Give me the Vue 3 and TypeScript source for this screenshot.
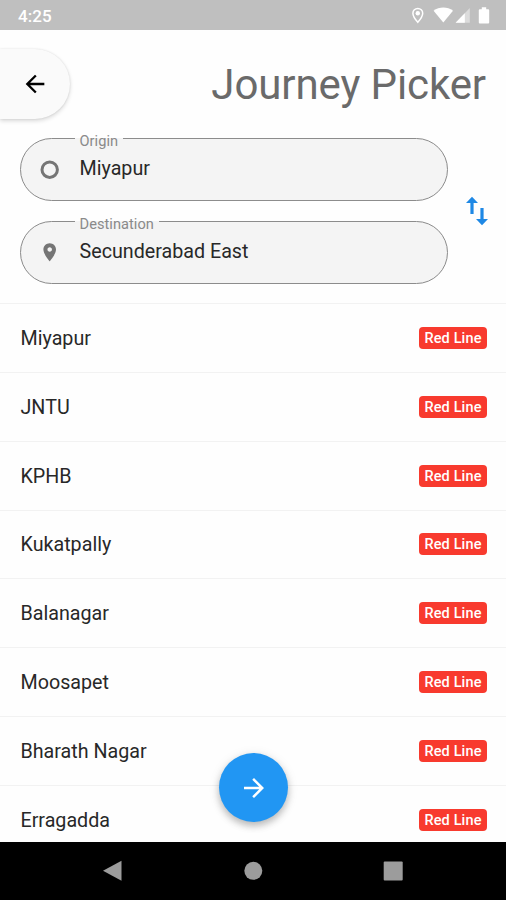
<script setup lang="ts">
interface Station {
  name: string
  line: string
}

interface JourneyField {
  label: string
  value: string
  icon: 'circle' | 'pin'
}

const fields: JourneyField[] = [
  { label: 'Origin', value: 'Miyapur', icon: 'circle' },
  { label: 'Destination', value: 'Secunderabad East', icon: 'pin' },
]

const stations: Station[] = [
  'Miyapur',
  'JNTU',
  'KPHB',
  'Kukatpally',
  'Balanagar',
  'Moosapet',
  'Bharath Nagar',
  'Erragadda',
].map((name) => ({ name, line: 'Red Line' }))
</script>

<template>
  <div class="screen">
    <header class="status">
      <span class="clock">4:25</span>
      <svg class="status-icons" width="80" height="20" viewBox="0 0 80 20" fill="#fff">
        <path d="M7.8 3.4a4.9 4.9 0 0 0-4.9 4.9c0 3.600 4.900 9 4.900 9s4.900-5.400 4.900-9a4.900 4.900 0 0 0-4.900-4.900z" fill="none" stroke="#fff" stroke-width="1.500" />
        <circle cx="7.800" cy="8.200" r="2.200" />
        <path d="M23.600 5.800c5.600-4.400 13.800-4.400 19.400 0L33.300 17.600z" />
        <path d="M59.800 3v14.800H45.600z" opacity=".45" />
        <path d="M54.800 8.200v9.600h-9.200z" />
        <path d="M71.800 2.300h4.400v1.900h2q1 0 1 1v12.400q0 1-1 1h-8.400q-1 0-1-1V5.200q0-1 1-1h2z" />
      </svg>
    </header>

    <main class="content">
      <div class="top">
        <button class="back" aria-label="Back">
          <svg width="28" height="28" viewBox="0 0 24 24">
            <path d="M20 11H7.830l5.590-5.590L12 4l-8 8 8 8 1.410-1.410L7.830 13H20v-2z" />
          </svg>
        </button>
        <h1>Journey Picker</h1>
      </div>

      <section class="journey">
        <div class="fields">
          <fieldset v-for="field in fields" :key="field.label" class="field">
            <legend><span>{{ field.label }}</span></legend>
            <div class="field-row">
              <svg v-if="field.icon === 'circle'" class="field-icon" width="24" height="24" viewBox="0 0 24 24">
                <circle cx="11.700" cy="11.700" r="7.700" fill="none" stroke="#757575" stroke-width="3" />
              </svg>
              <svg v-else class="field-icon" width="24" height="24" viewBox="0 0 24 24">
                <path transform="translate(.9 .5) scale(.9)" fill="#757575" d="M12 2C8.130 2 5 5.130 5 9c0 5.250 7 13 7 13s7-7.750 7-13c0-3.870-3.130-7-7-7zm0 9.500c-1.380 0-2.500-1.120-2.500-2.500s1.120-2.500 2.500-2.500 2.500 1.120 2.500 2.500-1.120 2.500-2.500 2.500z" />
              </svg>
              <span class="value">{{ field.value }}</span>
            </div>
          </fieldset>
        </div>
        <button class="swap" aria-label="Swap">
          <svg width="24" height="30" viewBox="0 0 24 30" fill="#1e88e5">
            <path d="M7 .8 13 7H8.600v11H5.400V7H1z" />
            <path d="M17 29.200 11 23h4.400V12h3.200v11H23z" />
          </svg>
        </button>
      </section>

      <ul class="stations">
        <li v-for="station in stations" :key="station.name">
          <span class="name">{{ station.name }}</span>
          <span class="badge">{{ station.line }}</span>
        </li>
      </ul>

      <button class="fab" aria-label="Continue">
        <svg width="30" height="30" viewBox="0 0 24 24" fill="#fff">
          <path d="m12 4-1.410 1.410L16.170 11H4v2h12.170l-5.580 5.590L12 20l8-8z" />
        </svg>
      </button>
    </main>

    <nav class="navbar">
      <svg width="20" height="22" viewBox="0 0 20 22"><path d="M18.500 .8v20L0 10.800z" /></svg>
      <svg width="20" height="22" viewBox="0 0 20 22"><circle cx="10.300" cy="10.800" r="9" /></svg>
      <svg width="20" height="22" viewBox="0 0 20 22"><rect x=".7" y="1.500" width="19" height="19" rx="1" /></svg>
    </nav>
  </div>
</template>

<style>
body {
  margin: 0;
  overflow: hidden;
}
</style>

<style scoped>
* {
  box-sizing: border-box;
}

.screen {
  width: 506px;
  height: 900px;
  display: flex;
  flex-direction: column;
  overflow: hidden;
  background: #fefefe;
  color: #282828;
  font-family: Roboto, sans-serif;
}

button {
  border: 0;
  padding: 0;
  display: flex;
  align-items: center;
  justify-content: center;
}

svg {
  display: block;
  flex: none;
}

.status {
  flex: none;
  height: 30px;
  display: flex;
  align-items: center;
  justify-content: space-between;
  padding: 0 16px 0 18px;
  background: #bfbfbf;
}

.clock {
  padding-top: 2px;
  color: #fff;
  font-size: 17px;
  font-weight: 500;
  letter-spacing: 0.1px;
}

.content {
  position: relative;
  flex: 1;
  min-height: 0;
  overflow: hidden;
}

.top {
  display: flex;
  justify-content: space-between;
  align-items: center;
  padding: 19px 20px 0 0;
}

.back {
  width: 70px;
  height: 70px;
  border-radius: 0 35px 35px 0;
  background: #fafafa;
  box-shadow: 0 2px 4px rgba(0, 0, 0, 0.15), 0 0 2px rgba(0, 0, 0, 0.1);
}

.back svg {
  fill: #000;
}

h1 {
  margin: 0;
  padding-top: 2px;
  color: #6a6a6a;
  font-size: 42px;
  font-weight: 400;
  line-height: 50px;
  letter-spacing: -0.1px;
}

.journey {
  display: flex;
  align-items: center;
  gap: 17px;
  padding: 19px 0 0 20px;
}

.fields {
  width: 428px;
  display: flex;
  flex-direction: column;
  gap: 20px;
}

.field {
  min-width: 0;
  height: 63px;
  margin: 0;
  padding: 0 0 0 54px;
  border: 1px solid #8c8c8c;
  border-radius: 31.5px;
  background: #f4f4f4;
}

legend {
  height: 1px;
  padding: 0 5px 0 4.5px;
  color: #8a8a8a;
  font-size: 14.6px;
  line-height: 1px;
  letter-spacing: 0.05px;
}

legend span {
  position: relative;
  top: 3px;
}

.field-row {
  height: 61px;
  margin-left: -37px;
  display: flex;
  align-items: center;
  gap: 17.5px;
}

.value {
  padding-bottom: 1px;
  font-size: 19.7px;
  line-height: 24px;
}

.swap {
  background: none;
}

.stations {
  list-style: none;
  margin: 19px 0 0;
  padding: 0;
}

.stations li {
  height: 68.85px;
  display: flex;
  align-items: center;
  justify-content: space-between;
  padding: 0 19px 0 20.5px;
  border-top: 1px solid #f2f2f2;
  font-size: 19.7px;
}

.name {
  padding-top: 1px;
}

.badge {
  width: 68px;
  height: 22px;
  border-radius: 4px;
  background: #f83a2e;
  color: #fff;
  font-size: 14.5px;
  font-weight: 500;
  line-height: 23px;
  letter-spacing: 0.15px;
  text-align: center;
}

.fab {
  position: absolute;
  left: 219px;
  top: 723px;
  width: 69px;
  height: 69px;
  border-radius: 50%;
  background: #2196f3;
  box-shadow: 0 4px 7px rgba(0, 0, 0, 0.22), 0 2px 12px rgba(0, 0, 0, 0.1);
}

.navbar {
  flex: none;
  height: 58px;
  display: flex;
  align-items: center;
  justify-content: space-between;
  padding: 0 103px;
  background: #000;
  fill: #9c9c9c;
}
</style>
